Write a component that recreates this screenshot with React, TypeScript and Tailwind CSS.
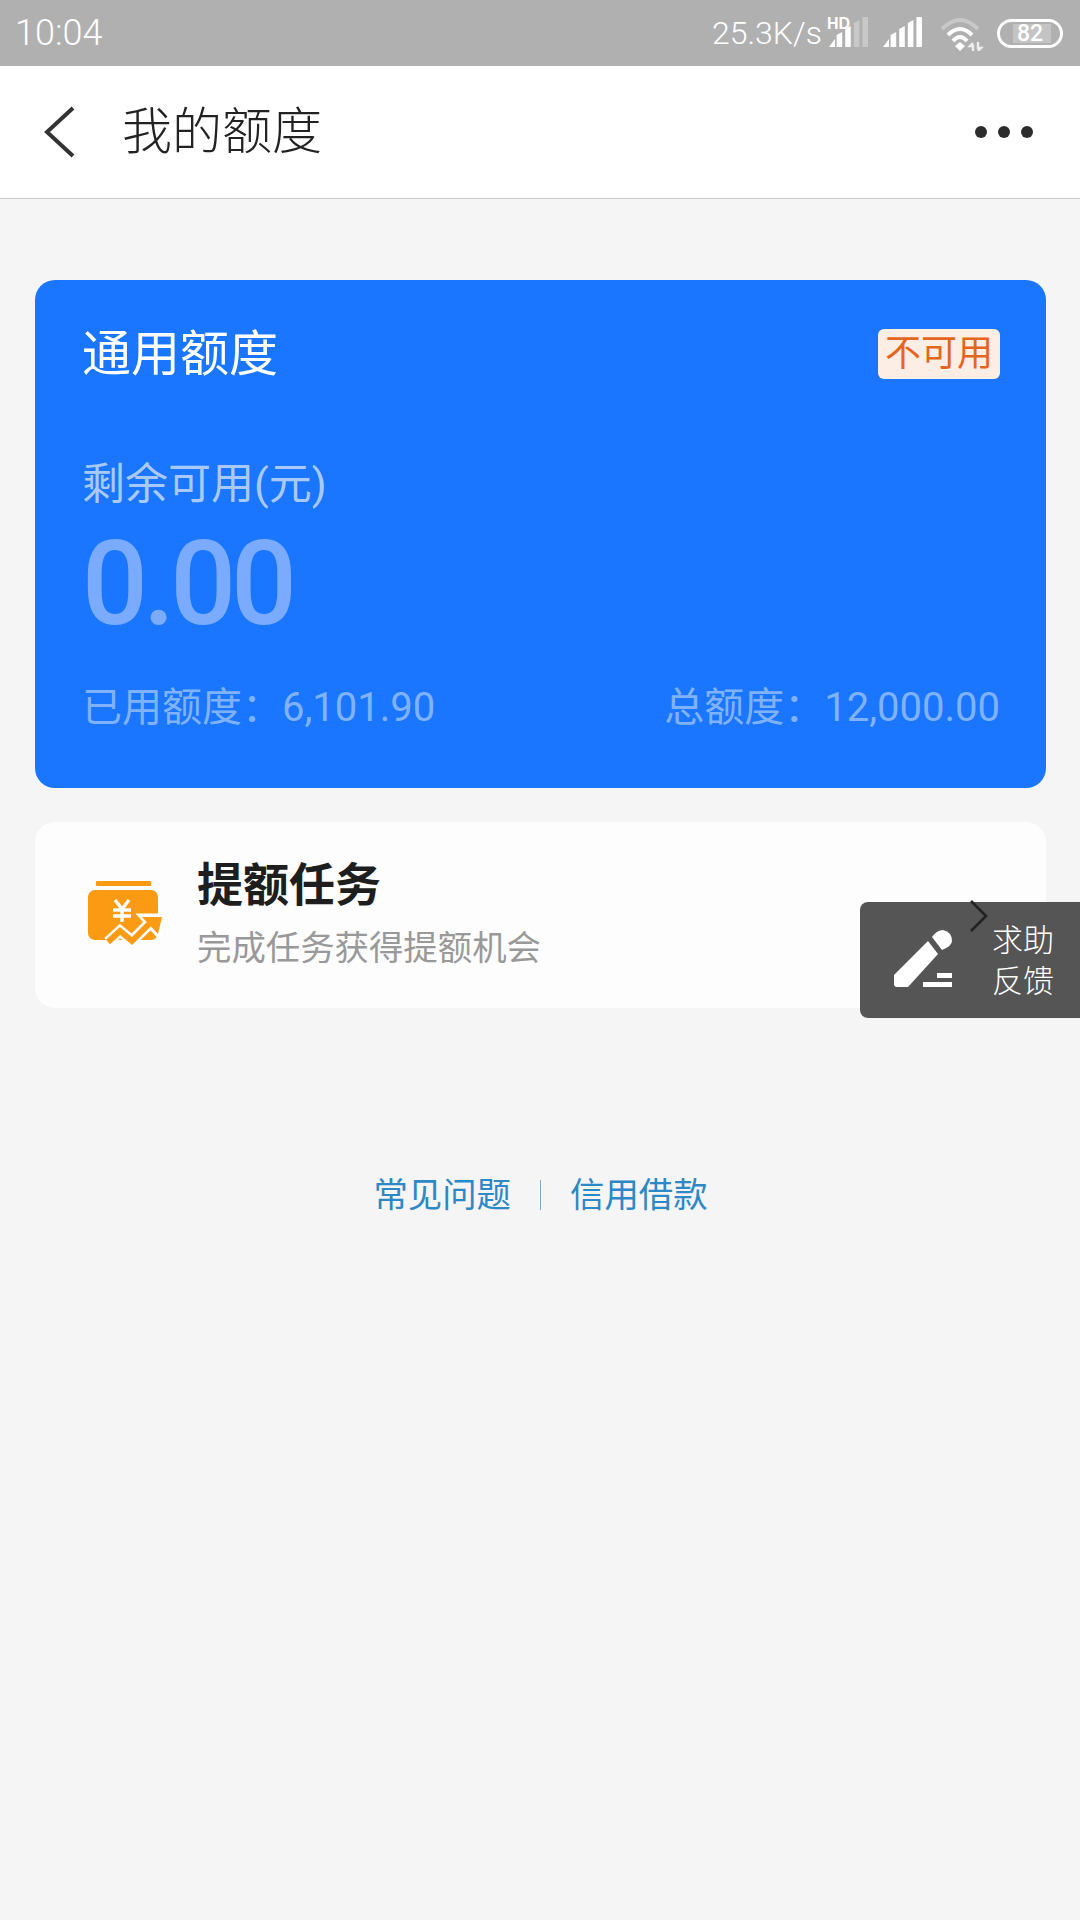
const font = "font-['Roboto','Noto_Sans_CJK_SC',sans-serif]"

function SignalBars({ dim = 0 }: { dim?: number }) {
  // five rising bars, the last `dim` of them greyed out
  const bars = [10, 16, 22, 28, 34]
  return (
    <svg width="42" height="30" viewBox="0 0 42 30" className="block">
      {bars.map((h, i) => (
        <path
          key={i}
          d={i === 0 ? `M1 30 L7 ${30 - h + 2} V30 Z` : `M${i * 8.6} 30 V${34 - h} L${i * 8.6 + 5.6} ${31 - h} V30 Z`}
          fill={i >= bars.length - dim ? "#c8c8c8" : "#fff"}
        />
      ))}
    </svg>
  )
}

function StatusBar() {
  return (
    <div className="flex h-[66px] items-center justify-between bg-[#b0b0b0] pl-[15px] pr-[17px] text-white">
      <span className="text-[36px] font-light leading-none">10:04</span>
      <div className="flex items-center">
        <span className="text-[32px] font-light leading-none">25.3K/s</span>
        <div className="relative ml-[6px] mt-[-2px]">
          <span className="absolute -top-[1px] -left-[1px] font-['Liberation_Sans'] text-[16px] font-bold leading-none">HD</span>
          <SignalBars dim={2} />
        </div>
        <div className="ml-[12px] mt-[-2px]">
          <SignalBars />
        </div>
        <svg width="44" height="34" viewBox="0 0 44 34" className="ml-[16px] mt-[2px]">
          <path d="M2 12 Q20 -6 38 12" fill="none" stroke="#c8c8c8" strokeWidth="4" />
          <path d="M8 18 Q20 6 32 18" fill="none" stroke="#fff" strokeWidth="4" />
          <path d="M13 24 Q20 16 27 24" fill="none" stroke="#fff" strokeWidth="4" />
          <path d="M15 29 L20 25 L25 29 L20 34 Z" fill="#fff" />
          <path d="M33 26 L30 29 H33 V34 M38 34 L41 31 H38 V25" fill="none" stroke="#eee" strokeWidth="2.4" />
        </svg>
        <div className="relative ml-[13px] flex h-[29px] w-[66px] items-center justify-center rounded-full border-[3px] border-white">
          <div className="absolute left-[13px] top-[2px] h-[19px] w-[38px] bg-[#c4c4c4]" />
          <span className="relative text-[23px] font-medium leading-none">82</span>
        </div>
      </div>
    </div>
  )
}

function NavBar() {
  return (
    <div className="flex h-[133px] items-center border-b border-[#c6c6c6] bg-white pl-[44px] pr-[47px]">
      <svg width="32" height="52" viewBox="0 0 32 52" className="shrink-0">
        <path d="M29 2 L3 26 L29 50" fill="none" stroke="#333" strokeWidth="4" />
      </svg>
      <span className="ml-[46px] text-[50px] font-light leading-none text-[#222]">我的额度</span>
      <div className="ml-auto flex gap-[11px]">
        <div className="h-[12px] w-[12px] rounded-full bg-[#2c2c2c]" />
        <div className="h-[12px] w-[12px] rounded-full bg-[#2c2c2c]" />
        <div className="h-[12px] w-[12px] rounded-full bg-[#2c2c2c]" />
      </div>
    </div>
  )
}

function QuotaCard() {
  return (
    <div className="flex h-[508px] flex-col rounded-[20px] bg-[#1a76ff] pl-[47px] pr-[46px]">
      <div className="mt-[49px] flex items-center justify-between">
        <span className="text-[49px] leading-none text-white">通用额度</span>
        <span className="flex h-[50px] w-[122px] items-center justify-center rounded-[6px] bg-[#fdeee5] text-[36px] leading-none text-[#e2661f]">
          不可用
        </span>
      </div>
      <div className="mt-[84px] text-[43px] leading-none text-[#a9c9fb]">剩余可用(元)</div>
      <div className="mt-[18px] text-[116px] font-medium leading-[120px] tracking-[-5px] text-[#7aabff]">0.00</div>
      <div className="mt-[44px] flex items-center justify-between text-[40px] leading-none text-[#80b2fa]">
        <span>已用额度：6,101.90</span>
        <span>总额度：12,000.00</span>
      </div>
    </div>
  )
}

function TaskIcon() {
  return (
    <svg width="76" height="68" viewBox="0 0 76 68" className="shrink-0">
      <rect x="8" y="0" width="55" height="5" rx="1" fill="#fb9a13" />
      <rect x="0" y="9" width="70" height="50" rx="7" fill="#fb9a13" />
      <path d="M27 19 L34 28 L41 19 M25 29 H43 M25 35 H43 M34 28 V41" fill="none" stroke="#fff" strokeWidth="3.4" />
      {/* trend arrow with a white halo cut out of the wallet */}
      <path d="M20 61 L32 50 L44 60 L62 42" fill="none" stroke="#fff" strokeWidth="11" />
      <path d="M53 35 H74 L70 54 Z" fill="#fff" stroke="#fff" strokeWidth="5" />
      <path d="M20 61 L32 50 L44 60 L62 42" fill="none" stroke="#fb9a13" strokeWidth="6" />
      <path d="M54 36 H74 L70 53 Z" fill="#fb9a13" />
    </svg>
  )
}

function TaskCard() {
  return (
    <div className="mt-[34px] flex h-[186px] items-center rounded-[20px] bg-[#fdfdfd] pl-[53px]">
      <TaskIcon />
      <div className="ml-[33px] mt-[-3px] flex flex-col">
        <span className="text-[46px] font-bold leading-none text-[#1e1e1e]">提额任务</span>
        <span className="mt-[23px] text-[34.4px] leading-none text-[#999]">完成任务获得提额机会</span>
      </div>
    </div>
  )
}

function HelpButton() {
  return (
    <div className="absolute left-[860px] top-[902px] flex h-[116px] w-[220px] items-center rounded-l-[8px] bg-[#555]">
      <svg width="58" height="58" viewBox="0 0 58 58" className="ml-[34px] mt-[-2px] shrink-0">
        <path d="M38 7 Q43 0 49 0 Q58 2 58 11 Q58 16 48 20 Z" fill="#fff" />
        <path d="M34 11 L44 24 L14 57 H3 Q0 57 0 54 V45 Z" fill="#fff" />
        <rect x="43" y="43" width="15" height="5" fill="#fff" />
        <rect x="29" y="52" width="29" height="5" fill="#fff" />
      </svg>
      <div className="ml-[40px] mt-[2px] flex flex-col gap-[9px] text-[31px] font-light leading-[32px] text-white">
        <span>求助</span>
        <span>反馈</span>
      </div>
      {/* row arrow of the card underneath sits on top of the button */}
      <svg width="20" height="34" viewBox="0 0 20 34" className="absolute left-[109px] top-[-3px]">
        <path d="M2 2 L17 17 L2 32" fill="none" stroke="#222" strokeWidth="2.6" />
      </svg>
    </div>
  )
}

export default function App() {
  return (
    <div className={`relative min-h-[1920px] w-[1080px] bg-[#f5f5f6] ${font}`}>
      <StatusBar />
      <NavBar />
      <div className="pl-[35px] pr-[34px] pt-[81px]">
        <QuotaCard />
        <TaskCard />
        <div className="mt-[170px] flex items-center justify-center text-[34.4px] leading-none text-[#2d88c6]">
          <span>常见问题</span>
          <div className="mx-[29px] h-[30px] w-[1px] bg-[#7fa9c8]" />
          <span>信用借款</span>
        </div>
      </div>
      <HelpButton />
    </div>
  )
}
